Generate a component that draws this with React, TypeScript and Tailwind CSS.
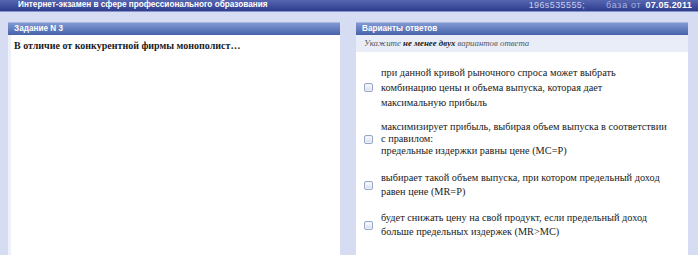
import React from "react";

function Check() {
  return (
    <span className="block shrink-0 w-[9px] h-[9px] rounded-[2px] border border-[#9aa7c4] bg-gradient-to-b from-[#ffffff] to-[#d3daea] shadow-[inset_0_0_0_1px_#eef1f8]" />
  );
}

const options: { lines: string[]; cls: string }[] = [
  {
    lines: [
      "при данной кривой рыночного спроса может выбрать",
      "комбинацию цены и объема выпуска, которая дает",
      "максимальную прибыль",
    ],
    cls: "leading-[15px]",
  },
  {
    lines: [
      "максимизирует прибыль, выбирая объем выпуска в соответствии",
      "с правилом:",
      "предельные издержки равны цене (MC=P)",
    ],
    cls: "leading-[12px] mt-[11px]",
  },
  {
    lines: [
      "выбирает такой объем выпуска, при котором предельный доход",
      "равен цене (MR=P)",
    ],
    cls: "leading-[14px] mt-[14px]",
  },
  {
    lines: [
      "будет снижать цену на свой продукт, если предельный доход",
      "больше предельных издержек (MR>MC)",
    ],
    cls: "leading-[14px] mt-[12px]",
  },
];

export default function App() {
  return (
    <div className="w-[698px] h-[255px] overflow-hidden bg-[#d6ddf3] flex flex-col font-['Liberation_Sans',Arial,sans-serif]">
      <div className="h-[12px] shrink-0 bg-gradient-to-b from-[#5766b0] to-[#2f3c8d] border-b border-[#8793cc] flex items-center justify-between pl-[18px] pr-[6px]">
        <span className="text-[8.2px] font-bold text-white leading-none">
          Интернет-экзамен в сфере профессионального образования
        </span>
        <span className="flex items-center text-[9px] leading-none">
          <span className="text-[#c8cff0] tracking-[0.4px]">196s535555;</span>
          <span className="ml-[21px] text-[#aab4e4] tracking-[0.7px]">база от</span>
          <span className="ml-[4px] font-bold text-white tracking-[0.2px]">07.05.2011</span>
        </span>
      </div>
      <div className="flex gap-[16px] pl-[8px] pr-[10px] pt-[10px] flex-1">
        <div className="w-[332px] flex flex-col">
          <div className="h-[13px] bg-gradient-to-b from-[#8198d3] to-[#4862aa] border-t border-[#a9b8e2] flex items-center pl-[6px]">
            <span className="text-[8.2px] font-bold text-white leading-none">Задание N 3</span>
          </div>
          <div className="flex-1 bg-white border-l-[3px] border-[#eef1f8] pl-[3px] pt-[4px]">
            <p className="text-[10px] font-bold text-[#1a1a1a] leading-[14px] font-['Liberation_Serif','Times_New_Roman',serif]">
              В отличие от конкурентной фирмы монополист…
            </p>
          </div>
        </div>
        <div className="w-[332px] flex flex-col">
          <div className="h-[13px] bg-gradient-to-b from-[#8198d3] to-[#4862aa] border-t border-[#a9b8e2] flex items-center pl-[6px]">
            <span className="text-[8.2px] font-bold text-white leading-none">Варианты ответов</span>
          </div>
          <div className="h-[17px] bg-[#e9edf8] flex items-center pl-[8px]">
            <span className="text-[8.8px] italic text-[#555] leading-none font-['Liberation_Serif','Times_New_Roman',serif]">
              Укажите <b className="text-[#222]">не менее двух</b> вариантов ответа
            </span>
          </div>
          <div className="flex-1 bg-white pl-[8px] pt-[13px] flex flex-col">
            {options.map((o, i) => (
              <div key={i} className={`flex items-center gap-[8px] ${o.cls}`}>
                <Check />
                <div className="text-[10.3px] text-[#222] font-['Liberation_Serif','Times_New_Roman',serif]">
                  {o.lines.map((l, j) => (
                    <div key={j}>{l}</div>
                  ))}
                </div>
              </div>
            ))}
          </div>
        </div>
      </div>
    </div>
  );
}
